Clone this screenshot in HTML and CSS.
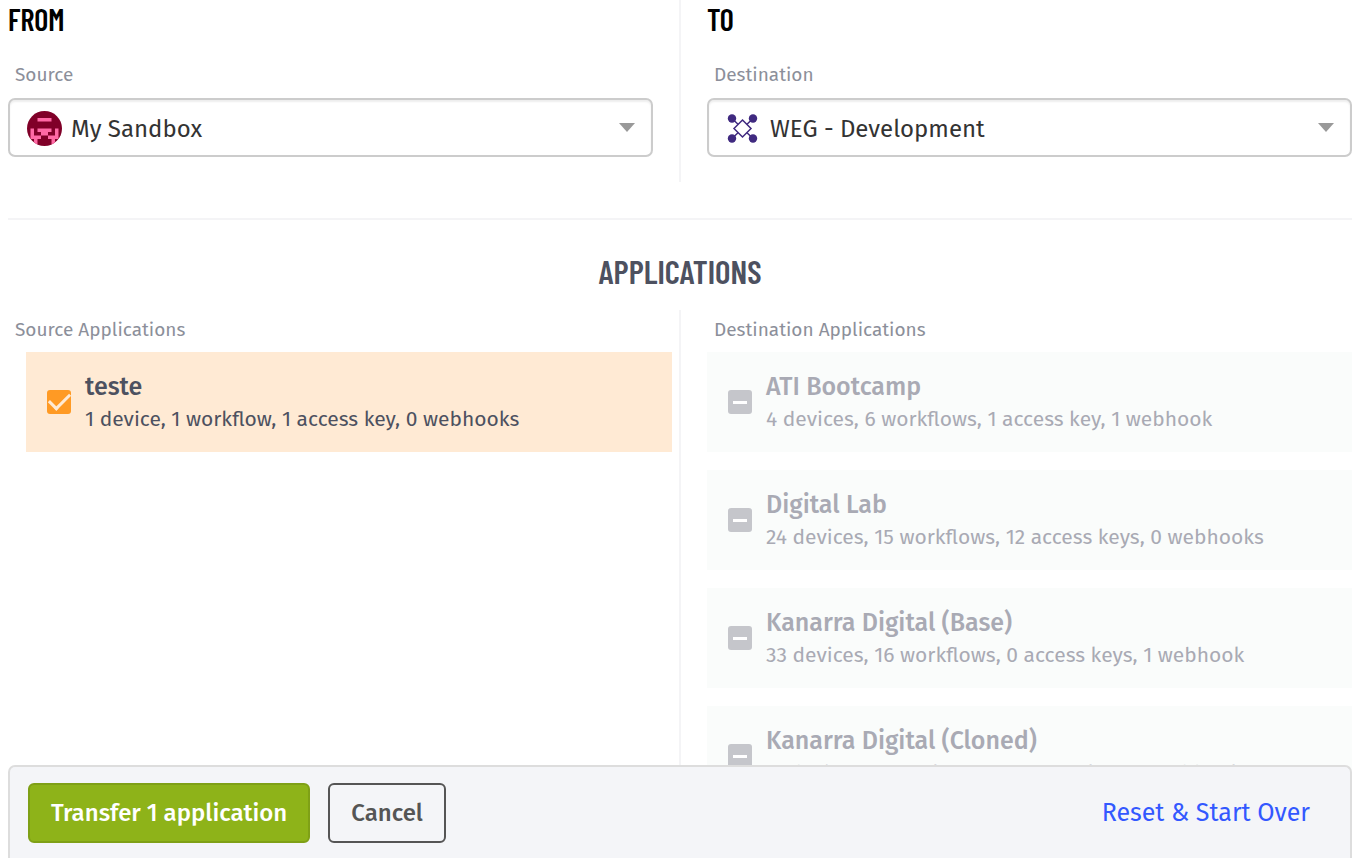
FILE: index.html
```html
<!DOCTYPE html>
<html lang="en">
<head>
<meta charset="UTF-8" />
<meta name="viewport" content="width=device-width, initial-scale=1" />
<title>Transfer Applications</title>
<link rel="stylesheet" href="styles.css">
</head>
<body>

<main class="page">
  <section class="columns columns-top">
    <div class="column">
      <h3 class="column-title">FROM</h3>
      <label class="field-label" for="source">Source</label>
      <div class="select-wrap">
        <svg class="select-icon" viewBox="0 0 35 35" aria-hidden="true">
          <clipPath id="avatar"><circle cx="17.5" cy="17.5" r="17.5" /></clipPath>
          <g clip-path="url(#avatar)">
            <rect width="35" height="35" fill="#800028" />
            <path fill="#ff69a5" d="M10.500 7h14v3.500h-14zM10.500 17.500h14v3.500h-3.500v3.500h-7v-3.500h-3.500zM3.500 17.500H7v7h7V28h-3.500v7H7v-7H3.500zM31.500 17.500H28v7h-7V28h3.500v7H28v-7h3.500z" />
          </g>
        </svg>
        <select class="select" id="source">
          <option>My Sandbox</option>
        </select>
      </div>
    </div>
    <div class="column">
      <h3 class="column-title">TO</h3>
      <label class="field-label" for="destination">Destination</label>
      <div class="select-wrap">
        <svg class="select-icon" viewBox="0 0 35 35" aria-hidden="true">
          <g fill="none" stroke="#402a80" stroke-width="1.500">
            <path d="M6 7.500 27 27.500M27 7.500 6 27.500" />
            <path fill="#fff" d="M16.500 9 25 17.500 16.500 26 8 17.500z" />
          </g>
          <g fill="#402a80">
            <circle cx="6" cy="7.500" r="4.200" />
            <circle cx="27" cy="7.500" r="4.200" />
            <circle cx="6" cy="27.500" r="4.200" />
            <circle cx="27" cy="27.500" r="4.200" />
          </g>
        </svg>
        <select class="select" id="destination">
          <option>WEG - Development</option>
        </select>
      </div>
    </div>
  </section>

  <hr class="separator">

  <h2 class="section-title">APPLICATIONS</h2>

  <section class="columns columns-apps">
    <div class="column">
      <h4 class="field-label">Source Applications</h4>
      <div class="app-list app-list-source">
        <label class="app app-selected">
          <input class="app-check" type="checkbox" checked>
          <span class="app-text">
            <span class="app-name">teste</span>
            <span class="app-info">1 device, 1 workflow, 1 access key, 0 webhooks</span>
          </span>
        </label>
      </div>
    </div>
    <div class="column">
      <h4 class="field-label">Destination Applications</h4>
      <div class="app-list">
        <label class="app app-disabled">
          <input class="app-check" type="checkbox" disabled>
          <span class="app-text">
            <span class="app-name">ATI Bootcamp</span>
            <span class="app-info">4 devices, 6 workflows, 1 access key, 1 webhook</span>
          </span>
        </label>
        <label class="app app-disabled">
          <input class="app-check" type="checkbox" disabled>
          <span class="app-text">
            <span class="app-name">Digital Lab</span>
            <span class="app-info">24 devices, 15 workflows, 12 access keys, 0 webhooks</span>
          </span>
        </label>
        <label class="app app-disabled">
          <input class="app-check" type="checkbox" disabled>
          <span class="app-text">
            <span class="app-name">Kanarra Digital (Base)</span>
            <span class="app-info">33 devices, 16 workflows, 0 access keys, 1 webhook</span>
          </span>
        </label>
        <label class="app app-disabled">
          <input class="app-check" type="checkbox" disabled>
          <span class="app-text">
            <span class="app-name">Kanarra Digital (Cloned)</span>
            <span class="app-info">11 devices, 14 workflows, 0 access keys, 1 webhook</span>
          </span>
        </label>
      </div>
    </div>
  </section>
</main>

<footer class="actions">
  <button class="btn btn-primary" type="button">Transfer 1 application</button>
  <button class="btn btn-outline" type="button">Cancel</button>
  <a class="reset-link" href="#">Reset &amp; Start Over</a>
</footer>

</body>
</html>
```
FILE: styles.css
```css
* { box-sizing: border-box; }
body {
  margin: 0;
  font-family: "Fira Sans", "Noto Sans", sans-serif;
  font-size: 24px;
  color: #4d5160;
  background: #fff;
}
.page {
  display: flex;
  flex-direction: column;
  min-height: 100vh;
  padding: 0 16px 0 8px;
}

/* two columns with a line down the middle */
.columns {
  display: grid;
  grid-template-columns: 1fr 2px 1fr;
  column-gap: 26px;
}
.columns::before {
  content: "";
  grid-column: 2;
  grid-row: 1;
  background: #f4f4f6;
}
.column { grid-row: 1; min-width: 0; }
.column:first-child { grid-column: 1; }
.column:last-child { grid-column: 3; }
.columns-top { height: 182px; }
.columns-apps { flex: 1; }

.column-title, .section-title {
  margin: 0;
  font-family: "Barlow Condensed", "Bebas Neue", "Roboto Condensed", Roboto, sans-serif;
  font-weight: 600;
}
.column-title { padding-top: 3px; font-size: 30px; line-height: 32px; color: #000; }
.section-title { padding-bottom: 20px; font-size: 33px; line-height: 38px; text-align: center; }

.field-label {
  display: block;
  margin: 0;
  padding-left: 7px;
  font-size: 19px;
  font-weight: 400;
  line-height: 26px;
  color: #8c8f9a;
}
.columns-top .field-label { padding-top: 27px; padding-bottom: 10px; }
.columns-apps .field-label { padding-top: 7px; padding-bottom: 9px; }

.select-wrap { position: relative; }
.select {
  display: block;
  width: 100%;
  height: 59px;
  padding: 2px 50px 0 61px;
  border: 2px solid #ccc;
  border-radius: 7px;
  background: #fff;
  box-shadow: inset 0 2px 2px #eee;
  color: #333;
  font-family: inherit;
  font-size: 24px;
  appearance: none;
}
.select-wrap::after {
  content: "";
  position: absolute;
  right: 18px;
  top: 25px;
  border: 8px solid transparent;
  border-top: 9px solid #999;
  border-bottom: 0;
}
.select-icon {
  position: absolute;
  left: 19px;
  top: 13px;
  width: 35px;
  height: 35px;
}

.separator {
  width: 100%;
  height: 2px;
  margin: 36px 0 32px;
  border: 0;
  background: #f4f4f6;
}

.app-list { display: flex; flex-direction: column; gap: 18px; }
.app-list-source { margin-left: 18px; margin-right: -19px; }
.app {
  display: flex;
  align-items: center;
  gap: 14px;
  height: 100px;
  padding: 0 21px;
}
.app-selected { background: #ffead4; }
.app-disabled { background: #fafcfb; color: #a9aab4; }
.app-text { display: flex; flex-direction: column; white-space: nowrap; }
.app-name { font-size: 25px; font-weight: 500; line-height: 34px; }
.app-info { font-size: 21px; line-height: 30px; }

.app-check {
  display: grid;
  place-items: center;
  flex: none;
  width: 24px;
  height: 24px;
  margin: 0;
  border-radius: 3px;
  background: #c5c6cb;
  appearance: none;
}
.app-check::before {
  content: "";
  width: 14px;
  height: 3px;
  background: #fff;
}
.app-check:checked { background: #ff9a24; }
.app-check:checked::before {
  width: 18px;
  height: 9px;
  margin-bottom: 6px;
  border: solid #ffead4;
  border-width: 0 0 3px 3px;
  background: none;
  transform: rotate(-45deg);
}

.actions {
  position: fixed;
  left: 8px;
  right: 16px;
  bottom: 0;
  display: flex;
  align-items: center;
  gap: 18px;
  padding: 16px 40px 15px 18px;
  border: 2px solid #ddd;
  border-bottom: 0;
  border-radius: 7px 7px 0 0;
  background: #f4f5f8;
}
.btn {
  height: 60px;
  padding: 0 21px;
  border: 2px solid;
  border-radius: 6px;
  font-family: inherit;
  font-size: 24px;
  font-weight: 500;
}
.btn-primary { border-color: #7fa016; background: #8eb319; color: #fff; }
.btn-outline { border-color: #555; background: transparent; color: #555; }
.reset-link { margin-left: auto; color: #3358ff; font-size: 25px; text-decoration: none; }
```
